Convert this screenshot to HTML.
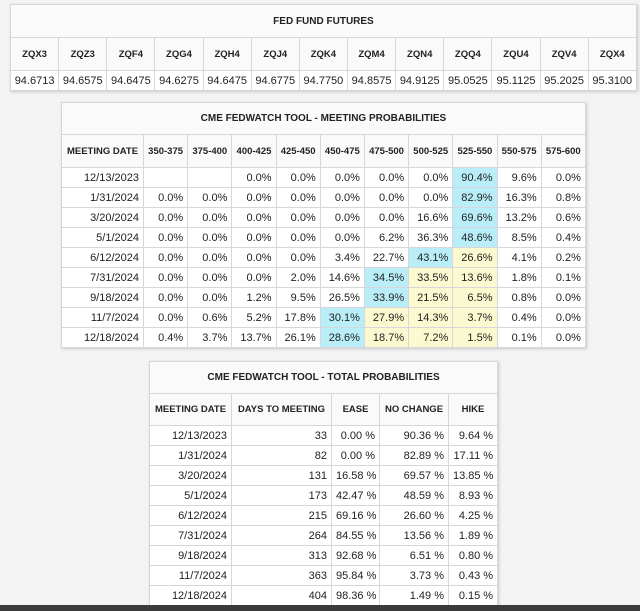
<!DOCTYPE html>
<html><head><meta charset="utf-8"><style>
body{margin:0;width:640px;height:611px;background:#f3f3f3;position:relative;overflow:hidden;font-family:"Liberation Sans",Arial,sans-serif;color:#222}
table{position:absolute;border-collapse:collapse;table-layout:fixed;background:#fff;box-shadow:1px 1px 3px rgba(0,0,0,.18)}
td,th{border:1px solid #d6d6dc;padding:0 4px;font-size:11px;white-space:nowrap;overflow:hidden}
th{font-size:9.5px;font-weight:bold;text-align:center;background:#fafafa}
th.t{font-size:10px}
td{text-align:right;height:19px}
.b{background:#b9eef9}.y{background:#fbf9cf}
#bar{position:absolute;left:0;top:605px;width:640px;height:6px;background:#3a3a3a}
</style></head><body>
<table style="left:10px;top:4px;width:626px">
<colgroup><col span="13" style="width:48.15px"></colgroup>
<tr><th class="t" colspan="13" style="height:32px">FED FUND FUTURES</th></tr>
<tr><th style="height:32px">ZQX3</th><th>ZQZ3</th><th>ZQF4</th><th>ZQG4</th><th>ZQH4</th><th>ZQJ4</th><th>ZQK4</th><th>ZQM4</th><th>ZQN4</th><th>ZQQ4</th><th>ZQU4</th><th>ZQV4</th><th>ZQX4</th></tr>
<tr style="background:#fff"><td style="padding:0 2px;text-align:center">94.6713</td><td style="padding:0 2px;text-align:center">94.6575</td><td style="padding:0 2px;text-align:center">94.6475</td><td style="padding:0 2px;text-align:center">94.6275</td><td style="padding:0 2px;text-align:center">94.6475</td><td style="padding:0 2px;text-align:center">94.6775</td><td style="padding:0 2px;text-align:center">94.7750</td><td style="padding:0 2px;text-align:center">94.8575</td><td style="padding:0 2px;text-align:center">94.9125</td><td style="padding:0 2px;text-align:center">95.0525</td><td style="padding:0 2px;text-align:center">95.1125</td><td style="padding:0 2px;text-align:center">95.2025</td><td style="padding:0 2px;text-align:center">95.3100</td></tr>
</table>

<table style="left:61px;top:102px;width:524px">
<colgroup><col style="width:82px"><col span="10" style="width:44.2px"></colgroup>
<tr><th class="t" colspan="11" style="height:31px">CME FEDWATCH TOOL - MEETING PROBABILITIES</th></tr>
<tr><th style="height:32px">MEETING DATE</th><th>350-375</th><th>375-400</th><th>400-425</th><th>425-450</th><th>450-475</th><th>475-500</th><th>500-525</th><th>525-550</th><th>550-575</th><th>575-600</th></tr>
<tr><td>12/13/2023</td><td></td><td></td><td>0.0%</td><td>0.0%</td><td>0.0%</td><td>0.0%</td><td>0.0%</td><td class="b">90.4%</td><td>9.6%</td><td>0.0%</td></tr>
<tr><td>1/31/2024</td><td>0.0%</td><td>0.0%</td><td>0.0%</td><td>0.0%</td><td>0.0%</td><td>0.0%</td><td>0.0%</td><td class="b">82.9%</td><td>16.3%</td><td>0.8%</td></tr>
<tr><td>3/20/2024</td><td>0.0%</td><td>0.0%</td><td>0.0%</td><td>0.0%</td><td>0.0%</td><td>0.0%</td><td>16.6%</td><td class="b">69.6%</td><td>13.2%</td><td>0.6%</td></tr>
<tr><td>5/1/2024</td><td>0.0%</td><td>0.0%</td><td>0.0%</td><td>0.0%</td><td>0.0%</td><td>6.2%</td><td>36.3%</td><td class="b">48.6%</td><td>8.5%</td><td>0.4%</td></tr>
<tr><td>6/12/2024</td><td>0.0%</td><td>0.0%</td><td>0.0%</td><td>0.0%</td><td>3.4%</td><td>22.7%</td><td class="b">43.1%</td><td class="y">26.6%</td><td>4.1%</td><td>0.2%</td></tr>
<tr><td>7/31/2024</td><td>0.0%</td><td>0.0%</td><td>0.0%</td><td>2.0%</td><td>14.6%</td><td class="b">34.5%</td><td class="y">33.5%</td><td class="y">13.6%</td><td>1.8%</td><td>0.1%</td></tr>
<tr><td>9/18/2024</td><td>0.0%</td><td>0.0%</td><td>1.2%</td><td>9.5%</td><td>26.5%</td><td class="b">33.9%</td><td class="y">21.5%</td><td class="y">6.5%</td><td>0.8%</td><td>0.0%</td></tr>
<tr><td>11/7/2024</td><td>0.0%</td><td>0.6%</td><td>5.2%</td><td>17.8%</td><td class="b">30.1%</td><td class="y">27.9%</td><td class="y">14.3%</td><td class="y">3.7%</td><td>0.4%</td><td>0.0%</td></tr>
<tr><td>12/18/2024</td><td>0.4%</td><td>3.7%</td><td>13.7%</td><td>26.1%</td><td class="b">28.6%</td><td class="y">18.7%</td><td class="y">7.2%</td><td class="y">1.5%</td><td>0.1%</td><td>0.0%</td></tr>
</table>

<table style="left:149px;top:361px;width:348px">
<colgroup><col style="width:82px"><col style="width:100px"><col style="width:48px"><col style="width:69px"><col style="width:49px"></colgroup>
<tr><th class="t" colspan="5" style="height:31px">CME FEDWATCH TOOL - TOTAL PROBABILITIES</th></tr>
<tr><th style="height:31px">MEETING DATE</th><th>DAYS TO MEETING</th><th>EASE</th><th>NO CHANGE</th><th>HIKE</th></tr>
<tr><td>12/13/2023</td><td>33</td><td>0.00 %</td><td>90.36 %</td><td>9.64 %</td></tr>
<tr><td>1/31/2024</td><td>82</td><td>0.00 %</td><td>82.89 %</td><td>17.11 %</td></tr>
<tr><td>3/20/2024</td><td>131</td><td>16.58 %</td><td>69.57 %</td><td>13.85 %</td></tr>
<tr><td>5/1/2024</td><td>173</td><td>42.47 %</td><td>48.59 %</td><td>8.93 %</td></tr>
<tr><td>6/12/2024</td><td>215</td><td>69.16 %</td><td>26.60 %</td><td>4.25 %</td></tr>
<tr><td>7/31/2024</td><td>264</td><td>84.55 %</td><td>13.56 %</td><td>1.89 %</td></tr>
<tr><td>9/18/2024</td><td>313</td><td>92.68 %</td><td>6.51 %</td><td>0.80 %</td></tr>
<tr><td>11/7/2024</td><td>363</td><td>95.84 %</td><td>3.73 %</td><td>0.43 %</td></tr>
<tr><td>12/18/2024</td><td>404</td><td>98.36 %</td><td>1.49 %</td><td>0.15 %</td></tr>
</table>
<div id="bar"></div>
</body></html>
